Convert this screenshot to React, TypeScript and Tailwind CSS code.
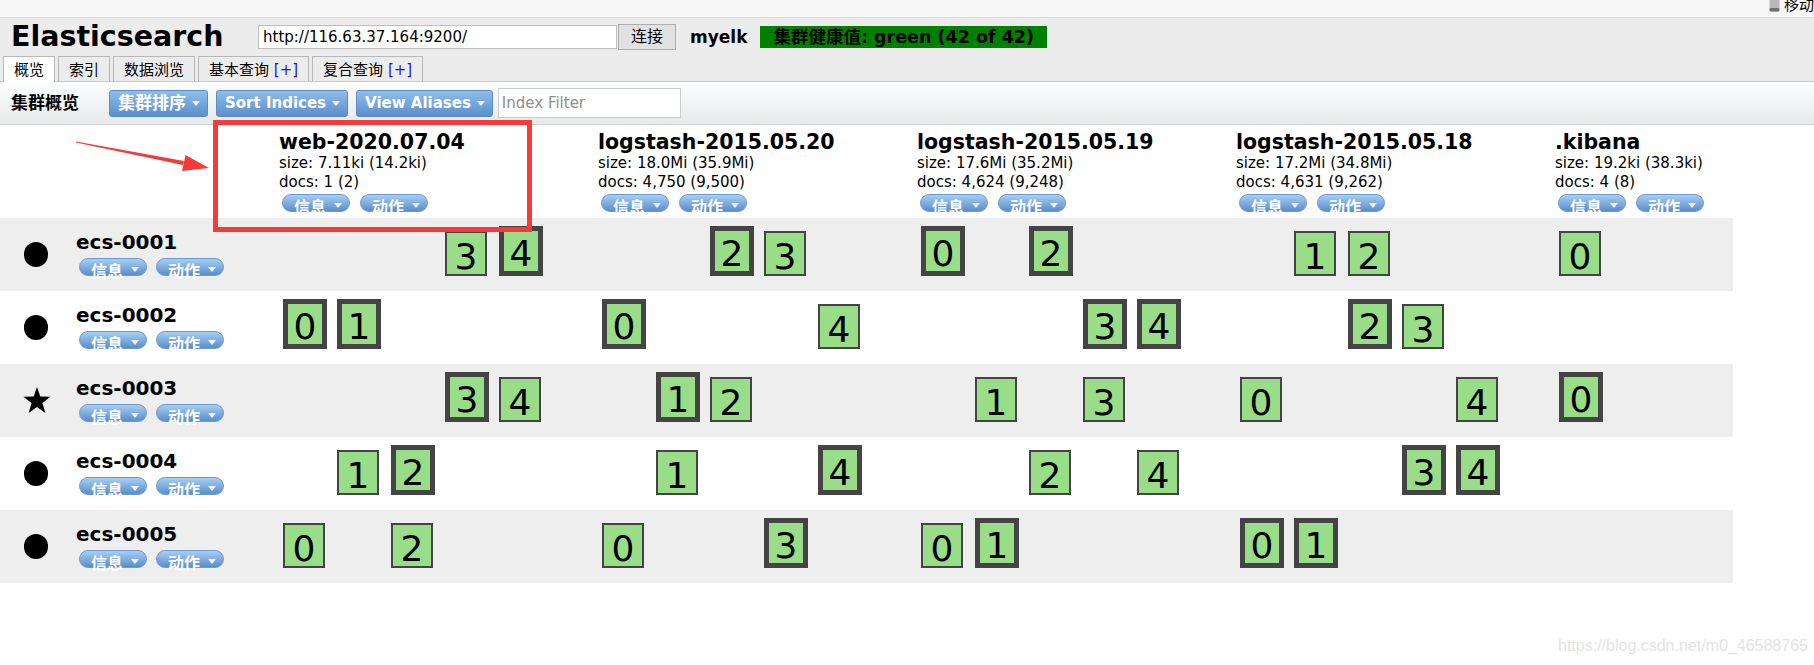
import React from "react";

type Shard = [number, boolean]; // shard number, is primary

const indices = [
  { name: "web-2020.07.04", size: "7.11ki (14.2ki)", docs: "1 (2)" },
  { name: "logstash-2015.05.20", size: "18.0Mi (35.9Mi)", docs: "4,750 (9,500)" },
  { name: "logstash-2015.05.19", size: "17.6Mi (35.2Mi)", docs: "4,624 (9,248)" },
  { name: "logstash-2015.05.18", size: "17.2Mi (34.8Mi)", docs: "4,631 (9,262)" },
  { name: ".kibana", size: "19.2ki (38.3ki)", docs: "4 (8)" },
];

const nodes: { name: string; master: boolean; shards: Shard[][] }[] = [
  {
    name: "ecs-0001",
    master: false,
    shards: [
      [[3, false], [4, true]],
      [[2, true], [3, false]],
      [[0, true], [2, true]],
      [[1, false], [2, false]],
      [[0, false]],
    ],
  },
  {
    name: "ecs-0002",
    master: false,
    shards: [
      [[0, true], [1, true]],
      [[0, true], [4, false]],
      [[3, true], [4, true]],
      [[2, true], [3, false]],
      [],
    ],
  },
  {
    name: "ecs-0003",
    master: true,
    shards: [
      [[3, true], [4, false]],
      [[1, true], [2, false]],
      [[1, false], [3, false]],
      [[0, false], [4, false]],
      [[0, true]],
    ],
  },
  {
    name: "ecs-0004",
    master: false,
    shards: [
      [[1, false], [2, true]],
      [[1, false], [4, true]],
      [[2, false], [4, false]],
      [[3, true], [4, true]],
      [],
    ],
  },
  {
    name: "ecs-0005",
    master: false,
    shards: [
      [[0, false], [2, false]],
      [[0, false], [3, true]],
      [[0, false], [1, true]],
      [[0, true], [1, true]],
      [],
    ],
  },
];

const Caret = ({ className = "" }: { className?: string }) => (
  <svg width="8" height="5" viewBox="0 0 8 5" className={className}>
    <path d="M0 0 L8 0 L4 5 Z" fill="#eef4fb" />
  </svg>
);

// pill buttons: label sits low and runs past the bottom edge, as in head
const Pill = ({ label }: { label: string }) => (
  <div className="flex items-start h-[18px] w-[68px] rounded-full border border-[#6b9ad0] bg-linear-to-b from-[#a8cff2] to-[#5a8dca] pl-[11px] pt-[3px] text-white font-bold text-[16px] leading-[20px]">
    <span className="whitespace-nowrap">{label}</span>
    <Caret className="mt-[5px] ml-[8px] shrink-0" />
  </div>
);

const ToolButton = ({ label, cjk }: { label: string; cjk?: boolean }) => (
  <div
    className={`flex items-center h-[27px] pl-[8px] pr-[7px] rounded-[3px] border border-[#5d8cc4] bg-linear-to-b from-[#90bde9] to-[#5b8fcc] text-white font-bold leading-[20px] ${
      cjk ? "text-[17px]" : "text-[15px]"
    }`}
  >
    <span className="whitespace-nowrap">{label}</span>
    <Caret className="ml-[6px]" />
  </div>
);

const ShardBox = ({ n, primary }: { n: number; primary: boolean }) => (
  <div
    className={`flex justify-center bg-[#99dd88] border-[#444444] text-black text-[36px] leading-[36px] ${
      primary ? "w-[44px] h-[50px] border-[5px] pt-[5px]" : "w-[42px] h-[45px] border-2 pt-[6px]"
    }`}
  >
    {n}
  </div>
);

const Star = () => (
  <svg width="28" height="27" viewBox="0 0 28 27">
    <path
      d="M14 0 L17.3 9.6 L27.6 9.8 L19.4 16 L22.4 26 L14 20 L5.6 26 L8.6 16 L0.4 9.8 L10.7 9.6 Z"
      fill="#000"
    />
  </svg>
);

const cols = "grid grid-cols-[279px_319px_319px_319px_319px_178px] w-[1733px]";

export default function App() {
  return (
    <div className="relative w-[1814px] h-[665px] overflow-hidden bg-white text-black font-['DejaVu_Sans','Noto_Sans_CJK_SC',sans-serif]">
      {/* browser strip */}
      <div className="h-[18px] bg-[#f7f7f7] border-b border-[#dadada] flex justify-end items-start overflow-hidden">
        <svg width="11" height="14" viewBox="0 0 11 14" className="-mt-[2px] mr-[4px]">
          <rect x="0.5" y="0" width="10" height="13.5" rx="2" fill="#b9b9b9" />
          <rect x="0.5" y="10" width="10" height="3.5" rx="1.5" fill="#6f6f6f" />
        </svg>
        <span className="-mt-[5px] text-[15px] leading-[20px] whitespace-nowrap">移动</span>
      </div>

      {/* header */}
      <div className="bg-[#ececec] border-b border-[#c4c4c4]">
        <div className="h-[38px] flex items-center">
          <div className="w-[258px] pl-[11px] text-[28.5px] leading-[34px] font-bold">Elasticsearch</div>
          <input
            readOnly
            defaultValue="http://116.63.37.164:9200/"
            className="w-[359px] h-[24px] border border-[#bdbdbd] bg-white pl-[4px] text-[15px] leading-[20px] outline-none"
          />
          <button className="ml-[1px] w-[58px] h-[26px] bg-[#e1e1e1] border border-[#adadad] text-[16px] leading-[20px]">
            连接
          </button>
          <span className="ml-[14px] text-[17px] font-bold leading-[22px]">myelk</span>
          <div className="ml-[13px] h-[22px] px-[13px] bg-[#008000] text-[17.5px] font-bold leading-[22px] whitespace-nowrap">
            集群健康值: green (42 of 42)
          </div>
        </div>
        <div className="h-[25px] flex items-end gap-[3px] pl-[3px]">
          {[
            { t: "概览", plus: false, active: true },
            { t: "索引", plus: false, active: false },
            { t: "数据浏览", plus: false, active: false },
            { t: "基本查询", plus: true, active: false },
            { t: "复合查询", plus: true, active: false },
          ].map((tab) => (
            <div
              key={tab.t}
              className={`px-[10px] pt-[2px] border border-b-0 border-[#b8b8b8] text-[15px] leading-[22px] whitespace-nowrap ${
                tab.active ? "h-[26px] -mb-px bg-white" : "h-[25px] bg-[#ececec]"
              }`}
            >
              {tab.t}
              {tab.plus && <span className="text-[#1414ff]"> [+]</span>}
            </div>
          ))}
        </div>
      </div>

      {/* toolbar */}
      <div className="h-[43px] flex items-center border-b border-[#d0d3d5] bg-linear-to-b from-[#fdfefe] to-[#e7e9ea]">
        <span className="pl-[11px] w-[109px] text-[17px] font-bold leading-[22px]">集群概览</span>
        <div className="flex items-center gap-[8px]">
          <ToolButton label="集群排序" cjk />
          <ToolButton label="Sort Indices" />
          <ToolButton label="View Aliases" />
        </div>
        <input
          placeholder="Index Filter"
          className="ml-[5px] w-[183px] h-[30px] border border-[#cccccc] bg-white pl-[3px] text-[15px] leading-[20px] placeholder:text-[#8e8e8e] outline-none"
        />
      </div>

      {/* index headers */}
      <div className={`${cols} h-[93px]`}>
        <div />
        {indices.map((ix) => (
          <div key={ix.name} className="flex flex-col pt-[5px] whitespace-nowrap">
            <div className="text-[20.5px] font-bold leading-[24px]">{ix.name}</div>
            <div className="text-[15px] leading-[19px]">size: {ix.size}</div>
            <div className="text-[15px] leading-[19px]">docs: {ix.docs}</div>
            <div className="flex gap-[10px] ml-[3px] mt-[2px]">
              <Pill label="信息" />
              <Pill label="动作" />
            </div>
          </div>
        ))}
      </div>

      {/* node rows */}
      {nodes.map((node, r) => (
        <div key={node.name} className={`${cols} h-[73px] ${r % 2 === 0 ? "bg-[#eeeeee]" : "bg-white"}`}>
          <div className="flex">
            <div className="w-[76px] flex items-center pl-[23px]">
              {node.master ? <Star /> : <div className="ml-[1px] w-[24px] h-[25px] rounded-full bg-black" />}
            </div>
            <div className="pt-[12px]">
              <div className="text-[20px] font-bold leading-[24px]">{node.name}</div>
              <div className="flex gap-[9px] ml-[3px] mt-[4px]">
                <Pill label="信息" />
                <Pill label="动作" />
              </div>
            </div>
          </div>
          {node.shards.map((list, c) => {
            const slots = c === 4 ? [0] : [0, 1, 2, 3, 4];
            return (
              <div key={c} className="flex items-end h-[58px] pl-[4px]">
                {slots.map((k) => {
                  const s = list.find((x) => x[0] === k);
                  return (
                    <div key={k} className="w-[54px] flex items-end">
                      {s && <ShardBox n={s[0]} primary={s[1]} />}
                    </div>
                  );
                })}
              </div>
            );
          })}
        </div>
      ))}

      {/* red annotation: box + arrow */}
      <div className="absolute left-[213px] top-[120px] w-[319px] h-[112px] border-[5px] border-[#f53a3a]" />
      <svg className="absolute left-0 top-0" width="260" height="200" viewBox="0 0 260 200">
        <polygon points="76,141.5 76,142.5 183,165 184,161" fill="#f53a3a" />
        <polygon points="209,168 185.5,155 182,171" fill="#f53a3a" />
      </svg>

      {/* watermark */}
      <div className="absolute left-[1558px] top-[637px] text-[16px] leading-[18px] text-[#e3e3e3] font-['Liberation_Sans',Arial,sans-serif] whitespace-nowrap">
        https://blog.csdn.net/m0_46588765
      </div>
    </div>
  );
}
